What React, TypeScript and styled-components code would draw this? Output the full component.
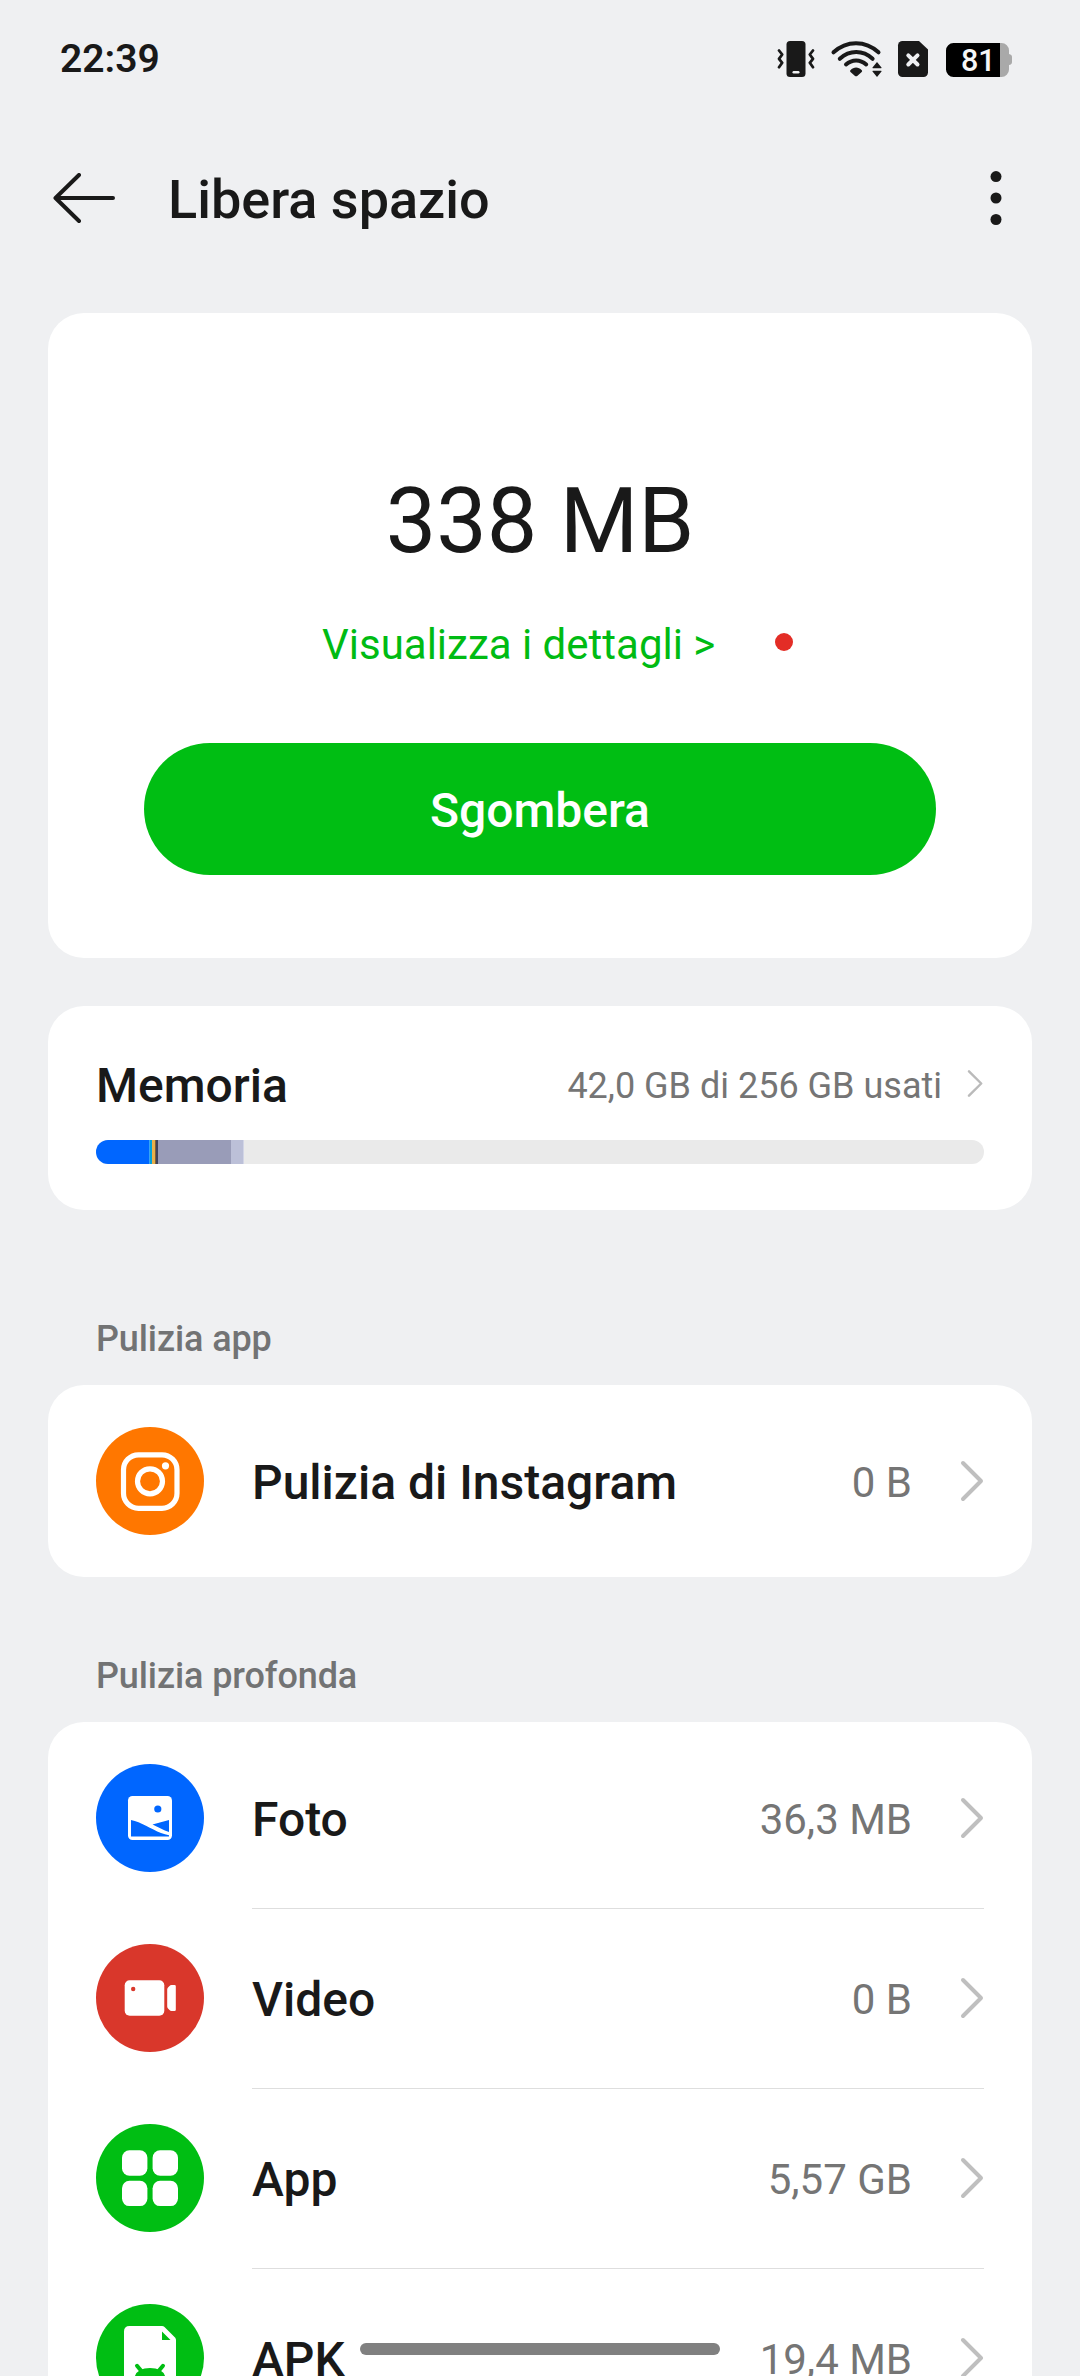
import React from "react";
import styled, { createGlobalStyle } from "styled-components";

const GlobalStyle = createGlobalStyle`
  *, *::before, *::after { box-sizing: border-box; }
  html, body { margin: 0; padding: 0; overflow: hidden; }
  body {
    background: #eff0f2;
    font-family: Roboto, "Noto Sans", sans-serif;
    color: #191919;
  }
`;

const Screen = styled.div`
  position: relative;
  width: 1080px;
  height: 2376px;
  overflow: hidden;
  background: #eff0f2;
  display: flex;
  flex-direction: column;
`;

const StatusBar = styled.header`
  display: flex;
  align-items: center;
  justify-content: space-between;
  height: 116px;
  padding: 2px 68px 0 60px;
  flex: none;
`;

const Clock = styled.span`
  font-size: 39px;
  font-weight: 600;
  line-height: 46px;
`;

const StatusIcons = styled.div`
  display: flex;
  align-items: center;
`;

const TitleBar = styled.div`
  display: flex;
  align-items: center;
  height: 166px;
  padding: 0 78px 0 53px;
  flex: none;
`;

const Title = styled.h1`
  margin: 1px 0 0 53px;
  flex: 1;
  font-size: 54px;
  font-weight: 500;
  line-height: 64px;
`;

const Card = styled.section<{ $pad?: string }>`
  background: #fff;
  border-radius: 36px;
  margin: 0 48px;
  padding: ${(p) => p.$pad ?? "6px 48px"};
  flex: none;
`;

const CleanCard = styled(Card)`
  margin-top: 31px;
  height: 645px;
  display: flex;
  flex-direction: column;
  align-items: center;
`;

const Amount = styled.div`
  margin-top: 156px;
  font-size: 90px;
  line-height: 106px;
`;

const DetailsLine = styled.div`
  display: flex;
  align-items: center;
  align-self: flex-start;
  margin: 45px 0 0 274px;
  gap: 60px;
  color: #00bb13;
  font-size: 42px;
  line-height: 50px;
`;

const RedDot = styled.i`
  width: 18px;
  height: 18px;
  border-radius: 50%;
  background: #e32d26;
  margin-bottom: 6px;
`;

const CleanButton = styled.button`
  margin-top: 73px;
  width: 792px;
  height: 132px;
  border: 0;
  border-radius: 66px;
  padding: 3px 0 0;
  background: #00be13;
  color: #fff;
  font: 500 48px/56px Roboto, sans-serif;
`;

const StorageCard = styled(Card)`
  margin-top: 48px;
  height: 204px;
`;

const StorageHead = styled.div`
  display: flex;
  align-items: center;
  height: 60px;
`;

const RowTitle = styled.span`
  flex: 1;
  font-size: 48px;
  font-weight: 500;
  line-height: 56px;
`;

const StorageUsed = styled.span`
  font-size: 36px;
  line-height: 42px;
  color: #757575;
  margin-right: 23px;
`;

const Track = styled.div`
  display: flex;
  height: 24px;
  margin-top: 24px;
  border-radius: 12px;
  overflow: hidden;
  background: #eaeaea;
`;

const Segment = styled.i<{ $w: number; $c: string }>`
  width: ${(p) => p.$w}px;
  background: ${(p) => p.$c};
`;

const SectionLabel = styled.h2<{ $top: number }>`
  margin: ${(p) => p.$top}px 96px 25px;
  font-size: 36px;
  font-weight: 500;
  line-height: 42px;
  letter-spacing: -0.1px;
  color: #727374;
  flex: none;
`;

const Row = styled.div`
  display: flex;
  align-items: center;
  height: 180px;
`;

const Badge = styled.span<{ $c: string }>`
  display: flex;
  width: 108px;
  height: 108px;
  border-radius: 50%;
  background: ${(p) => p.$c};
  margin-right: 48px;
`;

const RowBody = styled.div<{ $divided?: boolean }>`
  flex: 1;
  display: flex;
  align-items: center;
  height: 180px;
  padding-top: 2px;
  border-top: 1px solid ${(p) => (p.$divided ? "#dedede" : "transparent")};
`;

const RowValue = styled.span`
  font-size: 42px;
  line-height: 50px;
  color: #757575;
  margin-right: 48px;
`;

const HomeBar = styled.div`
  position: absolute;
  left: 360px;
  top: 2343px;
  width: 360px;
  height: 12px;
  border-radius: 6px;
  background: #808080;
`;

const StatusGlyphs = () => (
  <svg width="236" height="40" viewBox="776 39 236 40" fill="none">
    <rect x="786.5" y="41" width="19" height="36" rx="3.5" fill="#191919" />
    <rect x="792.5" y="71" width="7" height="2.4" rx="1.2" fill="#eff0f2" />
    <g stroke="#191919" strokeWidth="2.8" strokeLinecap="round" strokeLinejoin="round">
      <path d="M779 50.5l3.2 4-3.2 4.3 3.2 4-3.2 4.4" />
      <path d="M813 50.5l-3.2 4 3.2 4.3-3.2 4 3.2 4.4" />
    </g>
    <g stroke="#191919" strokeWidth="4" strokeLinecap="round">
      <path d="M833.5 52.3c13-12.2 32-12.2 45 0" />
      <path d="M839.8 58.8c9.600-9 23.200-9 32.800 0" />
      <path d="M846 64.500c6-5.400 14.200-5.400 20.200 0" />
    </g>
    <path d="M850.400 70.300c3.400-3.600 8-3.600 11.400 0 .5.500.4 1.300-.1 1.700l-4.500 3.900c-.7.600-1.500.6-2.200 0l-4.500-3.900c-.5-.4-.6-1.200-.1-1.700z" fill="#191919" />
    <path d="M877 62l4.500 5.400q.4.800-.5.800h-8q-.9 0-.5-.8zM877 77l4.500-5.400q.4-.8-.5-.8h-8q-.9 0-.5.800z" fill="#191919" />
    <path d="M902.500 41h16.500l9 8.500v23a4.500 4.500 0 0 1-4.500 4.500h-21a4.500 4.500 0 0 1-4.500-4.500v-27a4.500 4.500 0 0 1 4.500-4.500z" fill="#191919" />
    <path d="M908.300 55.300l9.200 9.200M917.500 55.300l-9.200 9.200" stroke="#eff0f2" strokeWidth="4" strokeLinecap="round" />
    <path d="M1000 43h1.500a7.500 7.500 0 0 1 7.500 7.500v3.500q3 .5 3 3v5q0 2.500-3 3v4.500a7.500 7.500 0 0 1-7.500 7.500h-1.500z" fill="#a9a9a9" />
    <path d="M1000 43v34h-46.500a7.500 7.500 0 0 1-7.500-7.500v-19a7.500 7.500 0 0 1 7.500-7.500z" fill="#000" />
    <text x="961" y="71" fontFamily="Roboto, sans-serif" fontSize="30.500" fontWeight="500" fill="#f6f6f6">81</text>
  </svg>
);

const BackArrow = () => (
  <svg width="62" height="52" viewBox="53 173 62 52" fill="none" stroke="#191919" strokeWidth="4" strokeLinecap="round" strokeLinejoin="round">
    <path d="M79 175L55.500 198 79 221M56 198h57" />
  </svg>
);

const MoreDots = () => (
  <svg width="12" height="56" viewBox="0 0 12 56" fill="#191919">
    <circle cx="6" cy="5.600" r="5.500" />
    <circle cx="6" cy="27" r="5.500" />
    <circle cx="6" cy="48.500" r="5.500" />
  </svg>
);

const SmallChevron = () => (
  <svg width="19" height="32" viewBox="0 0 19 32" fill="none" stroke="#bababa" strokeWidth="2.400" strokeLinecap="round" strokeLinejoin="round">
    <path d="M4 1.300l12.200 12.200L4 25.700" />
  </svg>
);

const Chevron = () => (
  <svg width="24" height="45" viewBox="0 0 24 45" fill="none" stroke="#bfbfbf" strokeWidth="4" strokeLinecap="round" strokeLinejoin="round">
    <path d="M3 3l18 18L3 39" />
  </svg>
);

const InstagramIcon = () => (
  <svg width="108" height="108" fill="none" stroke="#fff" strokeWidth="5.200">
    <rect x="27.500" y="27.800" width="53.500" height="53.500" rx="15" />
    <circle cx="54" cy="54.300" r="12.500" />
    <circle cx="69.500" cy="38.800" r="3.600" fill="#fff" stroke="none" />
  </svg>
);

const PhotoIcon = () => (
  <svg width="108" height="108" fill="none">
    <rect x="32" y="32" width="44" height="44" rx="4.500" fill="#fff" />
    <circle cx="61.800" cy="45" r="3.600" fill="#0066ff" />
    <path d="M35 56c10 2 20 9 30 13q4 1.500 8 2.300v1.200H35zM56.500 60.500L73 56v12c-5.500-1.700-11-5-16.500-7.500z" fill="#0066ff" />
  </svg>
);

const VideoIcon = () => (
  <svg width="108" height="108" fill="#fff">
    <rect x="28.700" y="36.300" width="39.600" height="35.400" rx="5" />
    <circle cx="37.200" cy="45" r="2.200" fill="#d9372b" />
    <path d="M75.500 41h3q1.300 0 1.300 1.300v23.400q0 1.300-1.300 1.300h-3q-1.200 0-2-.9l-1.500-1.600q-.8-.9-.8-2V45.500q0-1.100.8-2l1.500-1.600q.8-.9 2-.9z" />
  </svg>
);

const AppsIcon = () => (
  <svg width="108" height="108" fill="#fff">
    <rect x="26" y="26.300" width="25.400" height="25.400" rx="7.500" />
    <rect x="56.600" y="26.300" width="25.400" height="25.400" rx="7.500" />
    <rect x="26" y="56.700" width="25.400" height="25.400" rx="7.500" />
    <rect x="56.600" y="56.700" width="25.400" height="25.400" rx="7.500" />
  </svg>
);

const ApkIcon = () => (
  <svg width="108" height="108" fill="none">
    <path d="M33.500 22H66q1.500 0 2.500 1l10.500 10.500q1 1 1 2.500v44q0 5.500-5.500 5.500h-41q-5.500 0-5.500-5.500V27.500q0-5.500 5.500-5.500z" fill="#fff" />
    <path d="M66 27.500V36h8.500zM38 78q0-14 16-14t16 14z" fill="#00be13" />
    <path d="M41 61.800l5 6M67 61.800l-5 6" stroke="#00be13" strokeWidth="4" strokeLinecap="round" />
  </svg>
);

const storage = [
  { w: 53, c: "#0066ff" },
  { w: 1, c: "#35a5f5" },
  { w: 2, c: "#00a2dc" },
  { w: 3, c: "#e9b04b" },
  { w: 1, c: "#80613a" },
  { w: 2, c: "#40435a" },
  { w: 73, c: "#999cb8" },
  { w: 12, c: "#bcc0d8" },
  { w: 1, c: "#d2d5e6" },
];

const deepItems = [
  { name: "Foto", size: "36,3 MB", color: "#0066ff", Icon: PhotoIcon },
  { name: "Video", size: "0 B", color: "#d9372b", Icon: VideoIcon },
  { name: "App", size: "5,57 GB", color: "#00be13", Icon: AppsIcon },
  { name: "APK", size: "19,4 MB", color: "#00be13", Icon: ApkIcon },
];

type ItemProps = { name: string; size: string; color: string; Icon: React.FC; divided?: boolean };

const Item = ({ name, size, color, Icon, divided }: ItemProps) => (
  <Row>
    <Badge $c={color}><Icon /></Badge>
    <RowBody $divided={divided}>
      <RowTitle>{name}</RowTitle>
      <RowValue>{size}</RowValue>
      <Chevron />
    </RowBody>
  </Row>
);

export default function App() {
  return (
    <>
      <GlobalStyle />
      <Screen>
        <StatusBar>
          <Clock>22:39</Clock>
          <StatusIcons><StatusGlyphs /></StatusIcons>
        </StatusBar>
        <TitleBar>
          <BackArrow />
          <Title>Libera spazio</Title>
          <MoreDots />
        </TitleBar>
        <CleanCard $pad="0">
          <Amount>338 MB</Amount>
          <DetailsLine>
            <span>Visualizza i dettagli &gt;</span>
            <RedDot />
          </DetailsLine>
          <CleanButton>Sgombera</CleanButton>
        </CleanCard>
        <StorageCard $pad="50px 48px 0">
          <StorageHead>
            <RowTitle>Memoria</RowTitle>
            <StorageUsed>42,0 GB di 256 GB usati</StorageUsed>
            <SmallChevron />
          </StorageHead>
          <Track>
            {storage.map((s) => <Segment key={s.c} $w={s.w} $c={s.c} />)}
          </Track>
        </StorageCard>
        <SectionLabel $top={108}>Pulizia app</SectionLabel>
        <Card>
          <Item name="Pulizia di Instagram" size="0 B" color="#ff7700" Icon={InstagramIcon} />
        </Card>
        <SectionLabel $top={78}>Pulizia profonda</SectionLabel>
        <Card>
          {deepItems.map((item, i) => <Item key={item.name} {...item} divided={i > 0} />)}
        </Card>
        <HomeBar />
      </Screen>
    </>
  );
}
